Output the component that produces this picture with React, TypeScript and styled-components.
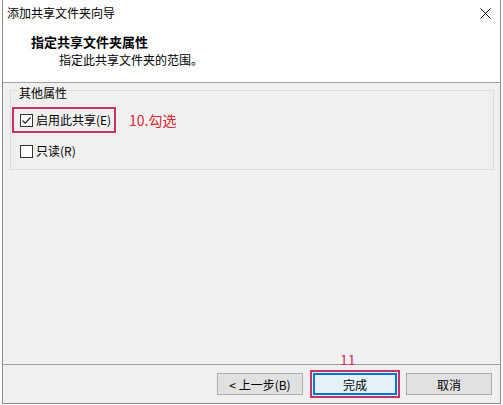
import React from "react";
import styled, { createGlobalStyle } from "styled-components";

const GlobalStyle = createGlobalStyle`
  html, body {
    margin: 0;
    padding: 0;
    background: #ffffff;
  }
  body {
    font-family: "Noto Sans CJK SC", "Noto Sans", sans-serif;
    font-size: 12px;
    color: #000;
  }
`;

const Window = styled.div`
  box-sizing: border-box;
  margin-left: 2px;
  width: 499px;
  height: 404px;
  border: 1px solid #8c8c8c;
  border-top: none;
  display: flex;
  flex-direction: column;
  background: #f0f0f0;
`;

const Header = styled.div`
  background: #ffffff;
  height: 83px;
  box-sizing: border-box;
  border-bottom: 1px solid #a0a0a0;
  display: flex;
  flex-direction: column;
`;

const TitleBar = styled.div`
  height: 26px;
  display: flex;
  align-items: center;
  justify-content: space-between;
  padding: 0 9px 0 4px;
`;

const TitleText = styled.span`
  font-size: 12px;
  line-height: 16px;
`;

const Heading = styled.div`
  margin-top: 8px;
  padding-left: 28px;
  font-size: 13px;
  font-weight: bold;
  line-height: 16px;
`;

const SubHeading = styled.div`
  margin-top: 2px;
  padding-left: 56px;
  font-size: 12px;
  line-height: 16px;
`;

const Body = styled.div`
  flex: 1;
  padding: 7px 6px 0 7px;
  position: relative;
`;

const GroupBox = styled.div`
  border: 1px solid #dcdcdc;
  padding: 0 0 10px 0;
  display: flex;
  flex-direction: column;
  align-items: flex-start;
`;

const Legend = styled.span`
  margin: -6px 0 0 7px;
  padding: 0 1px;
  background: #f0f0f0;
  line-height: 16px;
`;

const Marked = styled.div`
  margin: 6px 0 0 1px;
  display: flex;
  align-items: center;
`;

const RedFrame = styled.div`
  border: 2px solid #c8326a;
  height: 22px;
  padding: 0 0 0 6px;
  width: 94px;
  display: flex;
  align-items: center;
`;

const Note = styled.span`
  margin-left: 13px;
  color: #e0282e;
  font-size: 14px;
  line-height: 18px;
`;

const CheckRow = styled.label<{ $indent?: number }>`
  display: flex;
  align-items: center;
  gap: 3px;
  margin-left: ${(p) => p.$indent ?? 0}px;
  line-height: 16px;
`;

const Box = styled.span`
  box-sizing: border-box;
  width: 13px;
  height: 13px;
  border: 1px solid #333;
  background: #fff;
  display: inline-flex;
  align-items: center;
  justify-content: center;
`;

const SecondRow = styled.div`
  margin-top: 10px;
`;

const Footer = styled.div`
  height: 39px;
  box-sizing: border-box;
  border-top: 1px solid #a0a0a0;
  display: flex;
  justify-content: flex-end;
  align-items: flex-start;
  padding: 5px 8px 0 0;
  gap: 7px;
`;

const Button = styled.button`
  box-sizing: border-box;
  width: 86px;
  height: 22px;
  margin-top: 3px;
  border: 1px solid #adadad;
  background: #e1e1e1;
  font-family: "Noto Sans CJK SC", "Noto Sans", sans-serif;
  font-size: 12px;
  color: #000;
  padding: 0;
`;

const DefaultFrame = styled.div`
  position: relative;
  box-sizing: border-box;
  width: 90px;
  height: 28px;
  border: 2px solid #c8326a;
  padding: 1px;
  margin-right: -1px;
`;

const DefaultButton = styled.button`
  box-sizing: border-box;
  width: 84px;
  height: 22px;
  border: 2px solid #0078d7;
  background: #e5f1fb;
  font-family: "Noto Sans CJK SC", "Noto Sans", sans-serif;
  font-size: 12px;
  color: #000;
  padding: 0;
`;

const StepNumber = styled.span`
  position: absolute;
  top: -21px;
  left: 28px;
  color: #c8306a;
  font-size: 14px;
  line-height: 16px;
`;

const Check = ({ checked }: { checked?: boolean }) => (
  <Box>
    {checked && (
      <svg width="11" height="11" viewBox="0 0 11 11">
        <path d="M1.5 5.5 L4.2 8.2 L9.5 2.5" fill="none" stroke="#222" strokeWidth="1.2" />
      </svg>
    )}
  </Box>
);

export default function App() {
  return (
    <>
      <GlobalStyle />
      <Window>
        <Header>
          <TitleBar>
            <TitleText>添加共享文件夹向导</TitleText>
            <svg width="11" height="11" viewBox="0 0 11 11">
              <path d="M0.5 0.5 L10.5 10.5 M10.5 0.5 L0.5 10.5" stroke="#111" strokeWidth="1" />
            </svg>
          </TitleBar>
          <Heading>指定共享文件夹属性</Heading>
          <SubHeading>指定此共享文件夹的范围。</SubHeading>
        </Header>
        <Body>
          <GroupBox>
            <Legend>其他属性</Legend>
            <Marked>
              <RedFrame>
                <CheckRow>
                  <Check checked />
                  启用此共享(E)
                </CheckRow>
              </RedFrame>
              <Note>10.勾选</Note>
            </Marked>
            <SecondRow>
              <CheckRow $indent={9}>
                <Check />
                只读(R)
              </CheckRow>
            </SecondRow>
          </GroupBox>
        </Body>
        <Footer>
          <Button>&lt; 上一步(B)</Button>
          <DefaultFrame>
            <StepNumber>11</StepNumber>
            <DefaultButton>完成</DefaultButton>
          </DefaultFrame>
          <Button>取消</Button>
        </Footer>
      </Window>
    </>
  );
}
